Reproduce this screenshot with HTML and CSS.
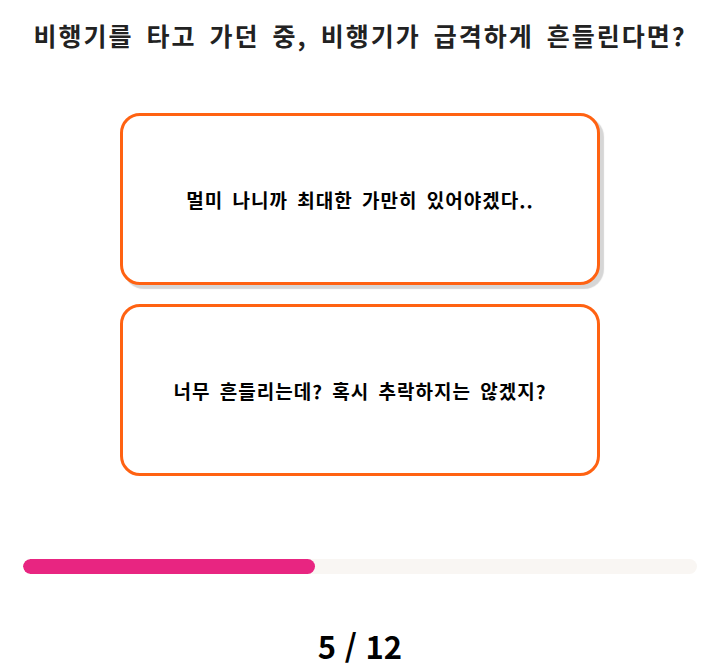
FILE: index.html
```html
<!DOCTYPE html>
<html lang="ko">
<head>
    <meta charset="UTF-8">
    <title>심리 테스트</title>
    <link rel="stylesheet" href="styles.css">
</head>
<body>
    <div class="container">
        <h1 class="question">비행기를 타고 가던 중, 비행기가 급격하게 흔들린다면?</h1>

        <div class="answers">
            <button class="answer answer-hover">멀미 나니까 최대한 가만히 있어야겠다..</button>
            <button class="answer">너무 흔들리는데? 혹시 추락하지는 않겠지?</button>
        </div>

        <div class="progress">
            <div class="progress-bar" style="width: 43.3%"></div>
        </div>

        <div class="counter">5 / 12</div>
    </div>
</body>
</html>
```

FILE: styles.css
```css
body {
    margin: 0;
    font-family: 'Malgun Gothic', 'Noto Sans CJK KR', sans-serif;
    background: #fff;
    color: #000;
}
.container {
    display: flex;
    flex-direction: column;
    align-items: center;
    padding: 17px 28px 0 23px;
}
.question {
    margin: 0;
    font-size: 25px;
    font-weight: bold;
    color: #222;
    line-height: 36px;
    letter-spacing: 2px;
    word-spacing: 4px;
    text-align: center;
    white-space: nowrap;
}
.answers {
    display: flex;
    flex-direction: column;
    gap: 19px;
    margin-top: 60px;
}
.answer {
    width: 480px;
    height: 172px;
    box-sizing: border-box;
    background: #fff;
    border: 3px solid #ff6212;
    border-radius: 20px;
    font-family: inherit;
    font-size: 19px;
    font-weight: bold;
    letter-spacing: 1px;
    word-spacing: 3px;
    color: #000;
    cursor: pointer;
}
.answer-hover {
    box-shadow: 4px 4px 1px #d6d6d6;
}
.progress {
    align-self: stretch;
    height: 15px;
    margin-top: 83px;
    background: #f9f6f3;
    border-radius: 8px;
    overflow: hidden;
}
.progress-bar {
    height: 100%;
    background: #e82581;
    border-radius: 8px;
}
.counter {
    margin-top: 54px;
    font-size: 31px;
    font-weight: bold;
    line-height: 36px;
}
```
